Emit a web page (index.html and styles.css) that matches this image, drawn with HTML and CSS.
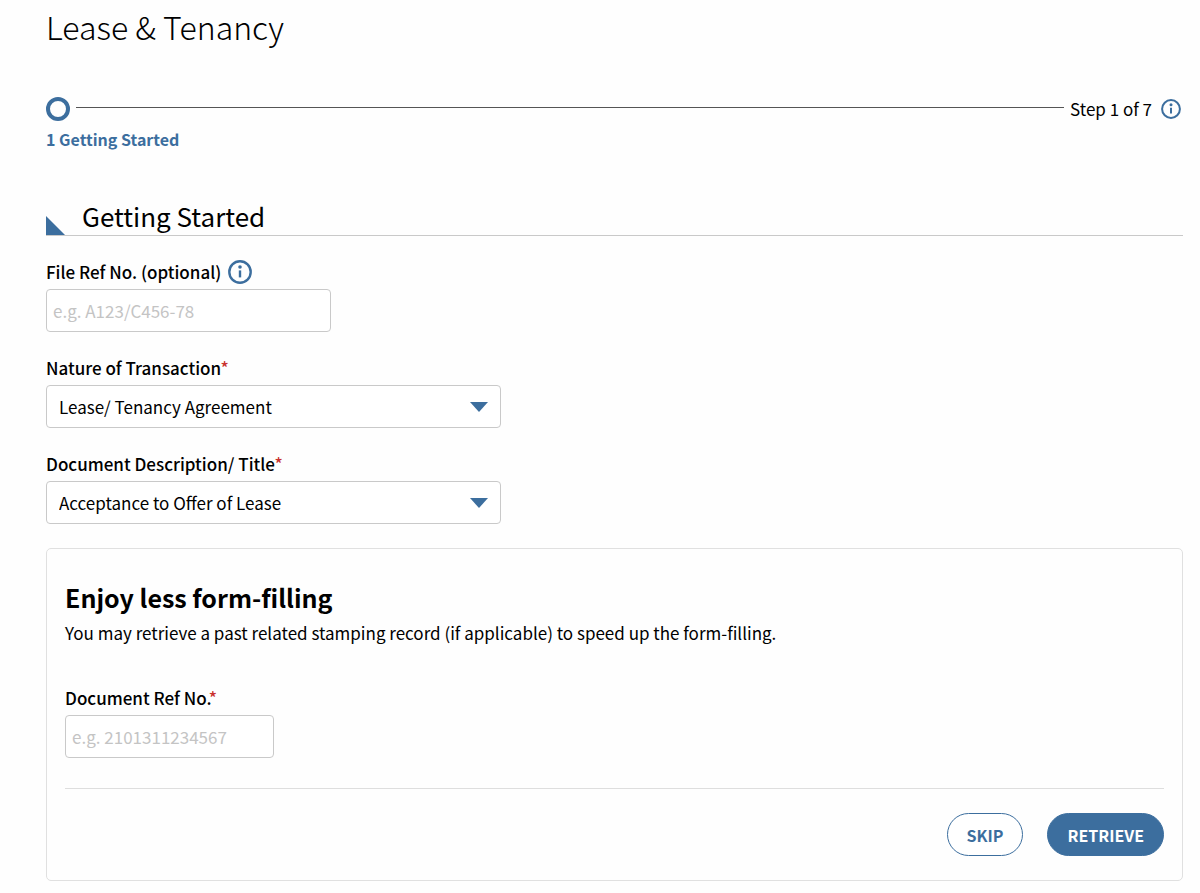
FILE: index.html
```html
<!DOCTYPE html>
<html lang="en">
<head>
<meta charset="utf-8">
<title>Lease &amp; Tenancy</title>
<meta name="viewport" content="width=device-width, initial-scale=1">
<link rel="stylesheet" href="styles.css">
</head>
<body>
<main class="page">
  <h1 class="page-title">Lease &amp; Tenancy</h1>

  <div class="progress">
    <div class="progress-track">
      <span class="progress-dot"></span>
      <span class="progress-line"></span>
      <span class="progress-count">Step 1 of 7</span>
      <button class="info info-small" type="button" aria-label="About the steps">
        <svg viewBox="0 0 24 24" aria-hidden="true"><circle cx="12" cy="12" r="10.7"/><path d="M12 10.4v7"/><circle class="info-point" cx="12" cy="7" r="1.8"/></svg>
      </button>
    </div>
    <p class="progress-label">1 Getting Started</p>
  </div>

  <h2 class="section-title">Getting Started</h2>

  <form class="form">
    <div class="field">
      <div class="field-head">
        <label class="label" for="file-ref">File Ref No. (optional)</label>
        <button class="info" type="button" aria-label="About the file reference number">
          <svg viewBox="0 0 24 24" aria-hidden="true"><circle cx="12" cy="12" r="10.7"/><path d="M12 10.4v7"/><circle class="info-point" cx="12" cy="7" r="1.8"/></svg>
        </button>
      </div>
      <input class="control control-medium" id="file-ref" type="text" placeholder="e.g. A123/C456-78">
    </div>

    <div class="field">
      <label class="label" for="nature">Nature of Transaction<span class="required">*</span></label>
      <select class="control control-select" id="nature" required>
        <option>Lease/ Tenancy Agreement</option>
      </select>
    </div>

    <div class="field">
      <label class="label" for="description">Document Description/ Title<span class="required">*</span></label>
      <select class="control control-select" id="description" required>
        <option>Acceptance to Offer of Lease</option>
      </select>
    </div>

    <section class="card">
      <h3 class="card-title">Enjoy less form-filling</h3>
      <p class="card-text">You may retrieve a past related stamping record (if applicable) to speed up the form-filling.</p>
      <div class="field">
        <label class="label" for="doc-ref">Document Ref No.<span class="required">*</span></label>
        <input class="control control-small" id="doc-ref" type="text" placeholder="e.g. 2101311234567" required>
      </div>
      <div class="card-actions">
        <button class="button" type="button">SKIP</button>
        <button class="button button-primary" type="submit">RETRIEVE</button>
      </div>
    </section>
  </form>
</main>
</body>
</html>
```
FILE: styles.css
```css
:root {
  --blue: #3c6e9e;
  --line: #c9c9c9;
}

* {
  box-sizing: border-box;
}

body {
  margin: 0;
  background: #fefefe;
  color: #000;
  font-family: "Noto Sans CJK SC", "Noto Sans", sans-serif;
  font-size: 17px;
  line-height: 24px;
}

h1, h2, h3, p {
  margin: 0;
}

button, input, select {
  font: inherit;
  color: inherit;
}

.page {
  padding: 8px 17px 12px 46px;
}

.page-title {
  font-size: 32px;
  font-weight: 300;
  line-height: 36px;
}

.progress {
  margin-top: 52px;
}

.progress-track {
  display: flex;
  align-items: center;
  height: 26px;
}

.progress-dot {
  width: 24px;
  height: 24px;
  border: 4px solid var(--blue);
  border-radius: 50%;
}

.progress-line {
  flex: 1;
  height: 1px;
  margin: 0 6px 3px;
  background: #555;
}

.progress-label {
  margin-top: 5px;
  color: var(--blue);
  font-size: 16px;
  font-weight: 700;
}

.info {
  width: 24px;
  height: 24px;
  padding: 0;
  border: 0;
  background: none;
}

.info-small {
  width: 20px;
  height: 20px;
  margin: 0 2px 0 9px;
}

.info svg {
  display: block;
  width: 100%;
  height: 100%;
  fill: none;
  stroke: var(--blue);
  stroke-width: 2.4;
}

.info .info-point {
  fill: var(--blue);
  stroke: none;
}

.section-title {
  display: flex;
  align-items: flex-end;
  gap: 17px;
  height: 36px;
  margin-top: 49px;
  border-bottom: 1px solid var(--line);
  font-size: 26px;
  font-weight: 400;
  line-height: 38px;
}

.section-title::before {
  content: "";
  width: 19px;
  height: 19px;
  background: var(--blue);
  clip-path: polygon(0 0, 100% 100%, 0 100%);
}

.form {
  display: grid;
  gap: 24px;
  margin-top: 24px;
}

.field {
  display: flex;
  flex-direction: column;
  align-items: flex-start;
  gap: 5px;
}

.field-head {
  display: flex;
  align-items: center;
  gap: 7px;
}

.label {
  font-size: 17px;
  font-weight: 500;
}

.required {
  color: #c9302c;
}

.control {
  width: 100%;
  height: 43px;
  padding: 0 6px;
  border: 1px solid var(--line);
  border-radius: 4px;
  background: #fff;
}

.control::placeholder {
  color: #c4c4c4;
  opacity: 1;
}

.control-medium {
  max-width: 285px;
}

.control-small {
  max-width: 209px;
}

.control-select {
  max-width: 455px;
  padding: 0 12px;
  appearance: none;
  background: #fff url("data:image/svg+xml,%3Csvg xmlns='http://www.w3.org/2000/svg' viewBox='0 0 18 10'%3E%3Cpath d='M0 0h18l-9 10z' fill='%233c6e9e'/%3E%3C/svg%3E") no-repeat right 12px center / 18px 10px;
}

.card {
  padding: 30px 18px 24px;
  border: 1px solid #e0e0e0;
  border-radius: 5px;
}

.card-title {
  font-size: 25px;
  font-weight: 700;
  line-height: 36px;
}

.card-text {
  margin: 6px 0 41px;
}

.card-actions {
  display: flex;
  justify-content: flex-end;
  gap: 24px;
  margin-top: 30px;
  padding-top: 24px;
  border-top: 1px solid #dedede;
}

.button {
  height: 43px;
  padding: 0 19px;
  border: 1px solid var(--blue);
  border-radius: 22px;
  background: #fff;
  color: var(--blue);
  font-size: 16px;
  font-weight: 700;
}

.button-primary {
  background: var(--blue);
  color: #fff;
}
```
